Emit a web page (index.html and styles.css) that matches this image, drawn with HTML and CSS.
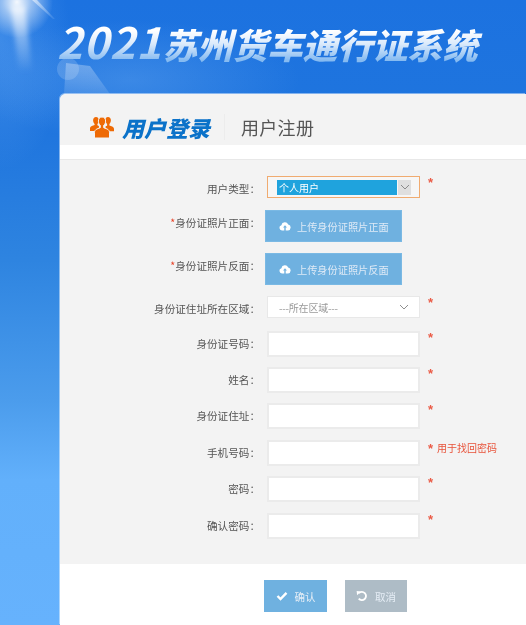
FILE: index.html
```html
<!DOCTYPE html>
<html lang="zh">
<head>
<meta charset="utf-8">
<title>2021苏州货车通行证系统</title>
<link rel="stylesheet" href="styles.css">
</head>
<body>
<svg class="rays" width="130" height="100" viewBox="0 0 130 100" aria-hidden="true">
  <defs>
    <radialGradient id="sun" cx="17" cy="2" r="36" gradientUnits="userSpaceOnUse">
      <stop offset="0" stop-color="#fff" stop-opacity=".95"/>
      <stop offset="0.4" stop-color="#fff" stop-opacity=".5"/>
      <stop offset="1" stop-color="#fff" stop-opacity="0"/>
    </radialGradient>
    <linearGradient id="beam" x1="0" y1="0" x2="0" y2="1">
      <stop offset="0" stop-color="#fff" stop-opacity=".7"/>
      <stop offset="1" stop-color="#fff" stop-opacity="0"/>
    </linearGradient>
    <linearGradient id="spark" x1="0" y1="0" x2="1" y2="1">
      <stop offset="0" stop-color="#fff" stop-opacity=".55"/>
      <stop offset="1" stop-color="#fff" stop-opacity=".08"/>
    </linearGradient>
    <linearGradient id="shard" x1="0" y1="0" x2="0" y2="1">
      <stop offset="0" stop-color="#fff" stop-opacity=".3"/>
      <stop offset="1" stop-color="#fff" stop-opacity=".1"/>
    </linearGradient>
    <filter id="soft" x="-40%" y="-20%" width="180%" height="140%"><feGaussianBlur stdDeviation="2.500"/></filter>
  </defs>
  <circle cx="17" cy="2" r="36" fill="url(#sun)"/>
  <polygon points="11,6 25,6 32,72 19,72" fill="url(#beam)" filter="url(#soft)"/>
  <polygon points="32,0 37,0 55,19 53,19" fill="url(#spark)"/>
  <polygon points="66,63 90,66 110,94 64,94" fill="url(#shard)"/>
  <circle cx="68" cy="69" r="11" fill="#fff" fill-opacity=".16"/>
</svg>

<header class="banner">
  <h1 class="title"><span class="title-num">2021</span>苏州货车通行证系统</h1>
</header>

<main class="panel">
  <div class="tabs">
    <svg class="tab-icon" width="24" height="24" viewBox="0 0 24 24" aria-hidden="true">
      <g transform="translate(0 1)">
        <path fill="#ee6a05" d="M6 1c1.800 0 2.900 1.400 2.900 3.300 0 1.500-.6 2.900-1.500 3.600v1.400l1.500.6v3.600l-1.900 1.400H0v-2.300c0-1.300.7-2.100 1.800-2.600l2.800-1V7.900C3.700 7.200 3.100 5.800 3.100 4.300 3.100 2.400 4.200 1 6 1z"/>
        <path fill="#ee6a05" d="M18 1c1.800 0 2.900 1.400 2.900 3.300 0 1.500-.6 2.900-1.500 3.600V9.400l2.800 1c1.100.5 1.800 1.300 1.800 2.600v2.300h-6.500l-1.900-1.400V10.300l1.500-.6V7.900c-.9-.7-1.500-2.100-1.500-3.600C15.100 2.400 16.200 1 18 1z"/>
      </g>
      <path fill="#ee6a05" stroke="#f3f3f3" stroke-width="1" d="M12 2c2.300 0 3.600 1.800 3.600 4.100 0 1.800-.8 3.400-1.900 4.200v2.400l3.400 1.300c1.500.7 2.400 1.800 2.400 3.500V23H4.500v-5.500c0-1.700.9-2.800 2.400-3.500l3.400-1.300v-2.400C9.200 9.500 8.400 7.900 8.400 6.100 8.400 3.800 9.700 2 12 2z"/>
    </svg>
    <span class="tab-login">用户登录</span>
    <span class="tab-divider"></span>
    <span class="tab-register">用户注册</span>
  </div>
  <div class="strip"></div>

  <form class="form">
    <div class="stack">
      <div class="row row-select">
        <label class="label">用户类型：</label>
        <div class="type-select">
          <span class="type-value">个人用户</span>
          <span class="type-arrow">
            <svg width="10" height="6" viewBox="0 0 10 6" aria-hidden="true"><path d="M1 1l4 4 4-4" fill="none" stroke="#8a8a8a" stroke-width="1"/></svg>
          </span>
        </div>
        <span class="star">*</span>
      </div>
      <div class="row">
        <label class="label"><em class="req">*</em>身份证照片正面：</label>
        <button type="button" class="upload">
          <svg width="12" height="10" viewBox="0 0 12 10" aria-hidden="true"><path fill="#fff" d="M3 9.500A2.700 2.700 0 0 1 2.400 4.200 3.600 3.600 0 0 1 9.200 3.400 3.100 3.100 0 0 1 9 9.500H6.700V6.500H8L6 4.200 4 6.500h1.300v3z"/></svg>
          上传身份证照片正面
        </button>
      </div>
      <div class="row">
        <label class="label"><em class="req">*</em>身份证照片反面：</label>
        <button type="button" class="upload">
          <svg width="12" height="10" viewBox="0 0 12 10" aria-hidden="true"><path fill="#fff" d="M3 9.500A2.700 2.700 0 0 1 2.400 4.200 3.600 3.600 0 0 1 9.200 3.400 3.100 3.100 0 0 1 9 9.500H6.700V6.500H8L6 4.200 4 6.500h1.300v3z"/></svg>
          上传身份证照片反面
        </button>
      </div>
      <div class="row row-region">
        <label class="label">身份证住址所在区域：</label>
        <div class="region">
          <span>---所在区域---</span>
          <svg width="10" height="6" viewBox="0 0 10 6" aria-hidden="true"><path d="M1 1l4 4 4-4" fill="none" stroke="#8f8f8f" stroke-width="1"/></svg>
        </div>
        <span class="star">*</span>
      </div>
    </div>

    <div class="fields">
      <div class="row"><label class="label">身份证号码：</label><input class="field" type="text"><span class="star">*</span></div>
      <div class="row"><label class="label">姓名：</label><input class="field" type="text"><span class="star">*</span></div>
      <div class="row"><label class="label">身份证住址：</label><input class="field" type="text"><span class="star">*</span></div>
      <div class="row"><label class="label">手机号码：</label><input class="field" type="text"><span class="star star-hint">*</span><span class="hint">用于找回密码</span></div>
      <div class="row"><label class="label">密码：</label><input class="field" type="password"><span class="star">*</span></div>
      <div class="row"><label class="label">确认密码：</label><input class="field" type="password"><span class="star">*</span></div>
    </div>
  </form>

  <div class="actions">
    <button type="button" class="btn btn-ok">
      <svg width="12" height="10" viewBox="0 0 12 10" aria-hidden="true"><path d="M1.500 5l3 3 6-6.200" fill="none" stroke="#fff" stroke-width="2.400"/></svg>
      确认
    </button>
    <button type="button" class="btn btn-cancel">
      <svg width="12" height="12" viewBox="0 0 11 11" aria-hidden="true"><path d="M2.600 2.900A3.800 3.800 0 1 1 2.500 8" fill="none" stroke="#fff" stroke-width="1.700"/><path d="M.6 .9l4 .4-3.600 3.600z" fill="#fff"/></svg>
      取消
    </button>
  </div>
</main>
</body>
</html>
```

FILE: styles.css
```css
* { box-sizing: border-box; }

html, body {
  margin: 0;
  height: 625px;
  overflow: hidden;
}

body {
  position: relative;
  background:
    radial-gradient(ellipse 170px 60px at 130px 80px, rgba(120, 180, 245, .32), rgba(120, 180, 245, 0)),
    radial-gradient(ellipse 70px 130px at 0 40px, rgba(110, 175, 245, .4), rgba(110, 175, 245, 0)),
    linear-gradient(180deg, #1c72e0 0, #1f75de 130px, #2e84e0 260px, #4b9cec 400px, #62b0fb 480px, #66b2fd 625px);
  font-family: "Noto Sans CJK SC", "Liberation Sans", sans-serif;
}

.rays {
  position: absolute;
  left: 0;
  top: 0;
}

.banner {
  position: relative;
  height: 94px;
  padding: 20px 0 0 57px;
}

.title {
  margin: 0;
  font-size: 35px;
  line-height: 48px;
  font-weight: 900;
  font-style: italic;
  white-space: nowrap;
  background: linear-gradient(180deg, #ffffff 22%, #dbeafb 50%, #86bbf1 84%);
  -webkit-background-clip: text;
  background-clip: text;
  color: transparent;
  filter: blur(.3px);
}

.title-num {
  font-size: 43px;
  line-height: 0;
  font-weight: 700;
  letter-spacing: 1px;
}

.panel {
  position: relative;
  margin-left: 60px;
  height: 531px;
  background: #fff;
  border-top-left-radius: 6px;
  overflow: hidden;
  box-shadow: -1px -1px 0 rgba(255, 255, 255, .45);
  filter: blur(.3px);
}

.tabs {
  display: flex;
  align-items: center;
  height: 51px;
  padding: 14px 0 0 30px;
  background: #f3f3f3;
}

.tab-icon { flex: none; }

.tab-login {
  margin-left: 8px;
  font-size: 22px;
  line-height: 30px;
  font-weight: 900;
  font-style: italic;
  color: #0b72c9;
}

.tab-divider {
  width: 1px;
  height: 26px;
  margin-left: 14px;
  background: #ececec;
}

.tab-register {
  margin-left: 16px;
  font-size: 18px;
  line-height: 26px;
  letter-spacing: 0.3px;
  color: #555;
}

.strip {
  height: 15px;
  background: #fff;
  border-bottom: 1px solid #e8e8e8;
}

.form {
  height: 404px;
  padding-top: 16px;
  background: #f3f3f3;
}

.stack {
  display: flex;
  flex-direction: column;
  gap: 11px;
}

.fields {
  display: flex;
  flex-direction: column;
  gap: 10.4px;
  margin-top: 12.6px;
}

.row {
  display: flex;
  align-items: flex-start;
}

.row-select { margin-bottom: 1px; }

.label {
  flex: none;
  width: 200px;
  padding-top: 6px;
  font-size: 10.6px;
  line-height: 14px;
  text-align: right;
  color: #555;
}

.req {
  font-style: normal;
  color: #e8442a;
}

.type-select {
  flex: none;
  display: flex;
  align-items: center;
  width: 153px;
  height: 22px;
  margin-left: 7px;
  padding-left: 9px;
  background: #f6f6f6;
  border: 1px solid #f0ab70;
}

.type-value {
  width: 120px;
  height: 15px;
  padding-left: 2px;
  font-size: 10px;
  line-height: 15px;
  color: #fff;
  background: #1fa3dd;
}

.type-arrow {
  display: flex;
  align-items: center;
  justify-content: center;
  width: 13px;
  height: 15px;
  margin-left: 1px;
  background: #dfdfdf;
}

.upload {
  display: flex;
  align-items: center;
  gap: 6px;
  width: 137px;
  height: 32px;
  margin: 0 0 0 5px;
  padding: 0 0 0 13px;
  font: inherit;
  font-size: 10.2px;
  color: #dfeaf6;
  background: #6fb1e0;
  border: 1px solid #7ab9e4;
  white-space: nowrap;
}

.region {
  flex: none;
  display: flex;
  align-items: center;
  justify-content: space-between;
  width: 153px;
  height: 22px;
  margin-left: 7px;
  padding: 0 10px 0 11px;
  font-size: 10px;
  letter-spacing: -0.2px;
  color: #9a9a9a;
  background: #fff;
  border: 1px solid #e8e8e8;
}

.field {
  flex: none;
  width: 153px;
  height: 26px;
  margin: 0 0 0 7px;
  padding: 0 6px;
  background: #fff;
  border: 2px solid #ebebeb;
  outline: none;
}

.star {
  flex: none;
  margin-top: -1px;
  margin-left: 8px;
  font-family: "Liberation Sans", sans-serif;
  font-size: 13px;
  font-weight: 700;
  line-height: 15px;
  color: #ea5a45;
}

.star-hint { margin-top: 1px; }

.hint {
  margin: 0 0 0 4px;
  padding-top: 1px;
  font-size: 10px;
  line-height: 14px;
  color: #e8533a;
}

.actions {
  display: flex;
  gap: 18px;
  padding: 16px 0 0 204px;
  background: #fff;
}

.btn {
  display: flex;
  align-items: center;
  justify-content: center;
  gap: 7px;
  height: 32px;
  margin: 0;
  padding: 0;
  font: inherit;
  font-size: 10.5px;
  color: #e6eef6;
  border: none;
}

.btn-ok {
  width: 63px;
  background: #6fb1e0;
}

.btn-cancel {
  width: 62px;
  background: #aebcc6;
}
```
